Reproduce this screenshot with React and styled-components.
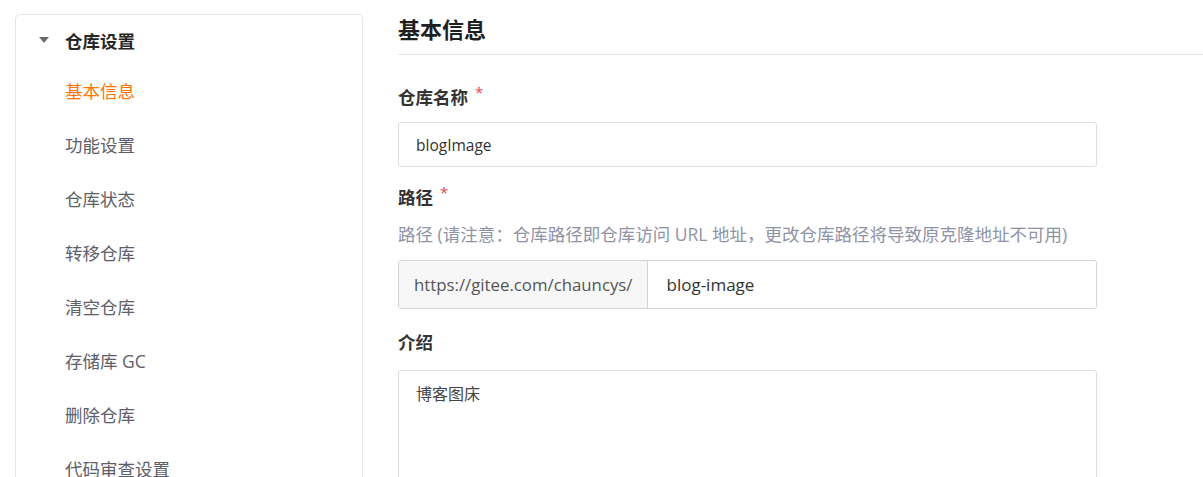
import React from 'react';
import styled, { createGlobalStyle } from 'styled-components';

const GlobalStyle = createGlobalStyle`
  html, body {
    margin: 0;
    padding: 0;
    background: #fff;
    overflow: hidden;
  }
  body {
    font-family: "Open Sans", "Noto Sans CJK SC", sans-serif;
    color: #333;
  }
`;

const Page = styled.div`
  display: flex;
  align-items: flex-start;
  gap: 35px;
  height: 477px;
  padding: 14px 0 0 15px;
  box-sizing: border-box;
  overflow: hidden;
`;

const Sidebar = styled.nav`
  flex: 0 0 348px;
  box-sizing: border-box;
  min-height: 520px;
  padding-top: 4px;
  border: 1px solid #e3e6ea;
  border-radius: 5px;
  background: #fff;
`;

const GroupHeader = styled.div`
  display: flex;
  align-items: center;
  height: 42px;
  margin-bottom: 2px;
  padding-left: 23px;
  font-size: 17.5px;
  font-weight: 700;
  color: #262626;
`;

const Caret = styled.span`
  width: 0;
  height: 0;
  margin-right: 16px;
  border-left: 5px solid transparent;
  border-right: 5px solid transparent;
  border-top: 6px solid #6b6b6b;
`;

const MenuItem = styled.a`
  display: flex;
  align-items: center;
  height: 54px;
  padding-left: 49px;
  font-size: 17.5px;
  color: ${(p) => (p.$active ? '#fe7300' : '#5d6068')};
  text-decoration: none;
`;

const Main = styled.main`
  flex: 1;
  min-width: 0;
`;

const Title = styled.h2`
  margin: 0;
  height: 40px;
  line-height: 30px;
  font-size: 22px;
  font-weight: 700;
  color: #1f1f1f;
  border-bottom: 1px solid #e1e3e6;
`;

const Form = styled.div`
  width: 699px;
  padding-top: 30px;
`;

const Field = styled.div`
  margin-bottom: ${(p) => p.$gap ?? 18}px;
`;

const Label = styled.div`
  display: flex;
  align-items: flex-start;
  line-height: 24px;
  font-size: 17.5px;
  font-weight: 700;
  color: #333;
  margin-bottom: ${(p) => p.$gap ?? 13}px;
`;

const Required = styled.span`
  margin-left: 7px;
  font-size: 15px;
  line-height: 14px;
  font-weight: 400;
  color: #e5484d;
`;

const Hint = styled.div`
  line-height: 24px;
  font-size: 17.5px;
  color: #8e93a6;
  margin-bottom: 14px;
`;

const TextInput = styled.input`
  display: block;
  width: 100%;
  height: 45px;
  box-sizing: border-box;
  padding: 0 17px;
  border: 1px solid #dcdde3;
  border-radius: 3px;
  font-family: "Open Sans", "Noto Sans CJK SC", sans-serif;
  font-size: 15.5px;
  color: #333;
  background: #fff;
  outline: none;
`;

const InputGroup = styled.div`
  display: flex;
  height: 49px;
  box-sizing: border-box;
  border: 1px solid #d2d4dc;
  border-radius: 3px;
  overflow: hidden;
`;

const Addon = styled.span`
  display: flex;
  align-items: center;
  padding: 0 15px;
  background: #f7f7f8;
  border-right: 1px solid #d2d4dc;
  font-size: 16.8px;
  color: #555;
  white-space: nowrap;
`;

const GroupInput = styled.input`
  flex: 1;
  min-width: 0;
  border: 0;
  padding: 0 18px;
  font-family: "Open Sans", "Noto Sans CJK SC", sans-serif;
  font-size: 17px;
  color: #333;
  outline: none;
  background: #fff;
`;

const TextArea = styled.textarea`
  display: block;
  width: 100%;
  height: 140px;
  box-sizing: border-box;
  padding: 11px 17px;
  border: 1px solid #dcdde3;
  border-radius: 3px;
  font-family: "Open Sans", "Noto Sans CJK SC", sans-serif;
  font-size: 16px;
  line-height: 24px;
  color: #444;
  resize: none;
  outline: none;
`;

const menu = [
  { label: '基本信息', active: true },
  { label: '功能设置' },
  { label: '仓库状态' },
  { label: '转移仓库' },
  { label: '清空仓库' },
  { label: '存储库 GC' },
  { label: '删除仓库' },
  { label: '代码审查设置' },
];

const App = () => (
  <>
    <GlobalStyle />
    <Page>
      <Sidebar>
        <GroupHeader>
          <Caret />
          仓库设置
        </GroupHeader>
        {menu.map((item) => (
          <MenuItem key={item.label} $active={item.active}>
            {item.label}
          </MenuItem>
        ))}
      </Sidebar>

      <Main>
        <Title>基本信息</Title>
        <Form>
          <Field $gap={18}>
            <Label>
              仓库名称<Required>*</Required>
            </Label>
            <TextInput defaultValue="blogImage" readOnly />
          </Field>

          <Field $gap={21}>
            <Label $gap={13}>
              路径<Required>*</Required>
            </Label>
            <Hint>路径 (请注意：仓库路径即仓库访问 URL 地址，更改仓库路径将导致原克隆地址不可用)</Hint>
            <InputGroup>
              <Addon>https://gitee.com/chauncys/</Addon>
              <GroupInput defaultValue="blog-image" readOnly />
            </InputGroup>
          </Field>

          <Field>
            <Label $gap={16}>介绍</Label>
            <TextArea defaultValue="博客图床" readOnly />
          </Field>
        </Form>
      </Main>
    </Page>
  </>
);

export default App;
